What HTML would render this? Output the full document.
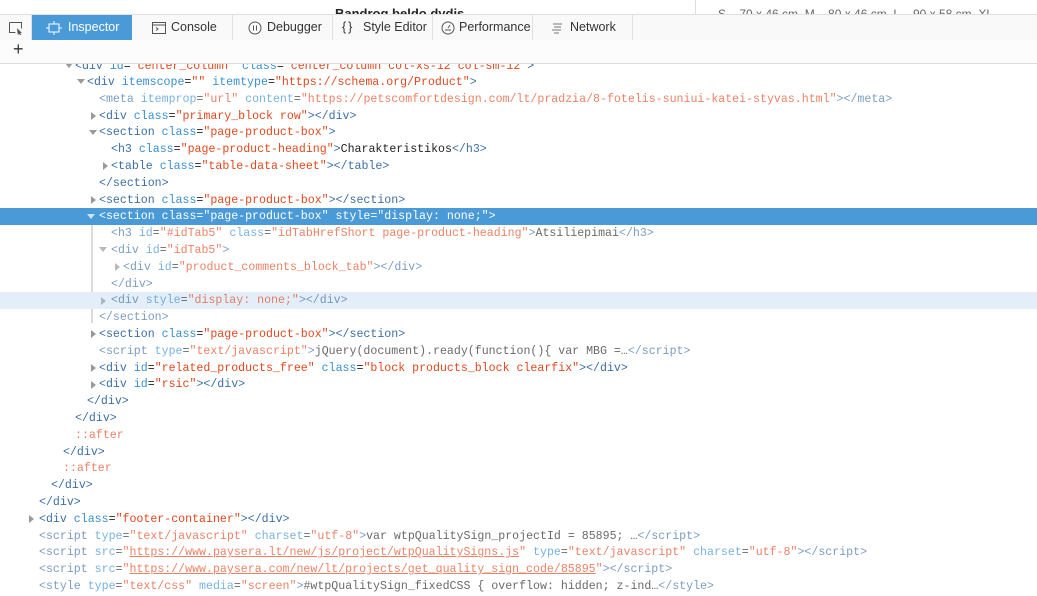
<!DOCTYPE html>
<html><head><meta charset="utf-8"><style>
body{margin:0;width:1037px;height:592px;overflow:hidden;background:#fff;position:relative;font-family:"Liberation Sans",sans-serif}
.top{position:absolute;left:0;top:0;width:1037px;height:14px;background:#fff;overflow:hidden}
.tabs{position:absolute;left:0;top:14px;width:1037px;height:25px;background:#f9f9fa;border-top:1px solid #e0e0e2;border-bottom:1px solid #dcdcde}
.tab{position:absolute;top:0;height:25px;line-height:25px;font-size:12.5px;color:#333;border-right:1px solid #e0e0e2;box-sizing:border-box}
.tab svg{position:absolute;top:6px}
.bar2{position:absolute;left:0;top:40px;width:1037px;height:23px;background:#fcfcfc;border-bottom:1px solid #dcdcde}
.ln{position:absolute;left:0;width:1037px;height:16.8px;line-height:16.8px;font-family:"Liberation Mono",monospace;font-size:11.6px;white-space:pre;color:#222}
.ln span.c{position:absolute;top:1.5px}
.t{color:#3c6fa5}.a{color:#3a8fd0}.v{color:#e2481e}.x{color:#222}.u{text-decoration:underline}
.f{opacity:.68}
.sel{background:#4a9ad8}.sel span,.sel .c *{color:#fff!important}
.hov{background:#e4eef8}
.tw{position:absolute;width:0;height:0}
.dn{border-left:4px solid transparent;border-right:4px solid transparent;border-top:5px solid #999;top:6px}
.rt{border-top:4px solid transparent;border-bottom:4px solid transparent;border-left:5px solid #999;top:5px}
.sel .dn{border-top-color:#cfe3f5}
</style></head><body>
<div class="top">
<div style="position:absolute;left:335px;top:6px;font-size:13px;font-weight:bold;color:#222">Bandrog beldo dydis</div>
<div style="position:absolute;left:695px;top:0;width:1px;height:14px;background:#ddd"></div>
<div style="position:absolute;left:718px;top:7px;font-size:12px;color:#666">S – 70 x 46 cm, M – 80 x 46 cm, L – 90 x 58 cm, XL</div>
</div>
<div class="tabs">
<div class="tab" style="left:0;width:32px"><svg width="16" height="14" viewBox="0 0 16 14" style="left:8px"><path d="M1.5 1.5h12v6M1.5 1.5v10h6" fill="none" stroke="#555"/><path d="M9 7l5 5-2 .3 1.2 1.5-1 .6-1.2-1.6-1.2 1.2z" fill="#555"/></svg></div>
<div class="tab" style="left:32px;width:100px;background:#4a9ad8;color:#fff;border:none"><svg width="16" height="14" viewBox="0 0 16 14" style="left:14px"><rect x="3" y="3" width="10" height="8" fill="none" stroke="#fff"/><path d="M8 0v3M8 11v3M0 7h3M13 7h3" stroke="#fff"/></svg><span style="position:absolute;left:36px">Inspector</span></div>
<div class="tab" style="left:132px;width:101px"><svg width="16" height="14" viewBox="0 0 16 14" style="left:19px"><rect x="1.5" y="1.5" width="13" height="11" fill="none" stroke="#555"/><path d="M1.5 4h13M5 6.5l2 1.5-2 1.5" fill="none" stroke="#555"/></svg><span style="position:absolute;left:39px">Console</span></div>
<div class="tab" style="left:233px;width:100px"><svg width="16" height="14" viewBox="0 0 16 14" style="left:14px"><circle cx="8" cy="7" r="6" fill="none" stroke="#555"/><path d="M6.5 4.5v5M9.5 4.5v5" stroke="#555"/></svg><span style="position:absolute;left:34px">Debugger</span></div>
<div class="tab" style="left:333px;width:100px"><span style="position:absolute;left:9px;letter-spacing:2px">{}</span><span style="position:absolute;left:30px">Style Editor</span></div>
<div class="tab" style="left:433px;width:100px"><svg width="16" height="14" viewBox="0 0 16 14" style="left:7px"><circle cx="8" cy="7" r="6" fill="none" stroke="#555"/><path d="M5 9h6M8 7l2-3" stroke="#555"/></svg><span style="position:absolute;left:26px">Performance</span></div>
<div class="tab" style="left:533px;width:100px"><svg width="16" height="14" viewBox="0 0 16 14" style="left:17px"><path d="M3 3h9M4 6h7M2 9h9M4 12h5" stroke="#777"/></svg><span style="position:absolute;left:37px">Network</span></div>
</div>
<div class="bar2"><span style="position:absolute;left:13px;top:-1px;font-size:18px;color:#333">+</span></div>

<div class="ln" style="top:64px;height:10px;overflow:hidden"><div style="position:absolute;top:-6.6px;left:0;width:1037px;height:16.8px"><span class="tw dn" style="left:65px"></span><span class="c" style="left:75px"><span class="t">&lt;div </span><span class="a">id</span><span class="x">=</span><span class="v">"center_column"</span><span class="a"> class</span><span class="x">=</span><span class="v">"center_column col-xs-12 col-sm-12"</span><span class="t">&gt;</span></span></div></div>

<div class="ln" style="top:73.4px"><span class="tw dn" style="left:77px"></span><span class="c" style="left:87px"><span class="t">&lt;div </span><span class="a">itemscope</span><span class="x">=</span><span class="v">""</span><span class="a"> itemtype</span><span class="x">=</span><span class="v">"https://schema.org/Product"</span><span class="t">&gt;</span></span></div>
<div class="ln f" style="top:90.2px"><span class="c" style="left:99px"><span class="t">&lt;meta </span><span class="a">itemprop</span><span class="x">=</span><span class="v">"url"</span><span class="a"> content</span><span class="x">=</span><span class="v">"https://petscomfortdesign.com/lt/pradzia/8-fotelis-suniui-katei-styvas.html"</span><span class="t">&gt;&lt;/meta&gt;</span></span></div>
<div class="ln" style="top:107px"><span class="tw rt" style="left:91px"></span><span class="c" style="left:99px"><span class="t">&lt;div </span><span class="a">class</span><span class="x">=</span><span class="v">"primary_block row"</span><span class="t">&gt;&lt;/div&gt;</span></span></div>
<div class="ln" style="top:123.8px"><span class="tw dn" style="left:89px"></span><span class="c" style="left:99px"><span class="t">&lt;section </span><span class="a">class</span><span class="x">=</span><span class="v">"page-product-box"</span><span class="t">&gt;</span></span></div>
<div class="ln" style="top:140.6px"><span class="c" style="left:111px"><span class="t">&lt;h3 </span><span class="a">class</span><span class="x">=</span><span class="v">"page-product-heading"</span><span class="t">&gt;</span><span class="x">Charakteristikos</span><span class="t">&lt;/h3&gt;</span></span></div>
<div class="ln" style="top:157.4px"><span class="tw rt" style="left:103px"></span><span class="c" style="left:111px"><span class="t">&lt;table </span><span class="a">class</span><span class="x">=</span><span class="v">"table-data-sheet"</span><span class="t">&gt;&lt;/table&gt;</span></span></div>
<div class="ln" style="top:174.2px"><span class="c" style="left:99px"><span class="t">&lt;/section&gt;</span></span></div>
<div class="ln" style="top:191px"><span class="tw rt" style="left:91px"></span><span class="c" style="left:99px"><span class="t">&lt;section </span><span class="a">class</span><span class="x">=</span><span class="v">"page-product-box"</span><span class="t">&gt;&lt;/section&gt;</span></span></div>
<div class="ln sel" style="top:207.8px"><span class="tw dn" style="left:87px"></span><span class="c" style="left:99px"><span>&lt;section class="page-product-box" style="display: none;"&gt;</span></span></div>
<div style="position:absolute;left:91px;top:225px;width:2px;height:98px;background:#dcdcde"></div>
<div class="ln f" style="top:224.6px"><span class="c" style="left:111px"><span class="t">&lt;h3 </span><span class="a">id</span><span class="x">=</span><span class="v">"#idTab5"</span><span class="a"> class</span><span class="x">=</span><span class="v">"idTabHrefShort page-product-heading"</span><span class="t">&gt;</span><span class="x">Atsiliepimai</span><span class="t">&lt;/h3&gt;</span></span></div>
<div class="ln f" style="top:241.4px"><span class="tw dn" style="left:99px"></span><span class="c" style="left:111px"><span class="t">&lt;div </span><span class="a">id</span><span class="x">=</span><span class="v">"idTab5"</span><span class="t">&gt;</span></span></div>
<div class="ln f" style="top:258.2px"><span class="tw rt" style="left:115px"></span><span class="c" style="left:123px"><span class="t">&lt;div </span><span class="a">id</span><span class="x">=</span><span class="v">"product_comments_block_tab"</span><span class="t">&gt;&lt;/div&gt;</span></span></div>
<div class="ln f" style="top:275px"><span class="c" style="left:111px"><span class="t">&lt;/div&gt;</span></span></div>
<div class="ln hov" style="top:291.8px"><span class="f"><span class="tw rt" style="left:101px"></span><span class="c" style="left:111px"><span class="t">&lt;div </span><span class="a">style</span><span class="x">=</span><span class="v">"display: none;"</span><span class="t">&gt;&lt;/div&gt;</span></span></span></div>
<div class="ln f" style="top:308.6px"><span class="c" style="left:99px"><span class="t">&lt;/section&gt;</span></span></div>
<div class="ln" style="top:325.4px"><span class="tw rt" style="left:91px"></span><span class="c" style="left:99px"><span class="t">&lt;section </span><span class="a">class</span><span class="x">=</span><span class="v">"page-product-box"</span><span class="t">&gt;&lt;/section&gt;</span></span></div>
<div class="ln" style="top:342.2px"><span class="c f" style="left:99px"><span class="t">&lt;script </span><span class="a">type</span><span class="x">=</span><span class="v">"text/javascript"</span><span class="t">&gt;</span><span class="x">jQuery(document).ready(function(){ var MBG =…</span><span class="t">&lt;/script&gt;</span></span></div>
<div class="ln" style="top:359px"><span class="tw rt" style="left:91px"></span><span class="c" style="left:99px"><span class="t">&lt;div </span><span class="a">id</span><span class="x">=</span><span class="v">"related_products_free"</span><span class="a"> class</span><span class="x">=</span><span class="v">"block products_block clearfix"</span><span class="t">&gt;&lt;/div&gt;</span></span></div>
<div class="ln" style="top:375.8px"><span class="tw rt" style="left:91px"></span><span class="c" style="left:99px"><span class="t">&lt;div </span><span class="a">id</span><span class="x">=</span><span class="v">"rsic"</span><span class="t">&gt;&lt;/div&gt;</span></span></div>
<div class="ln" style="top:392.6px"><span class="c" style="left:87px"><span class="t">&lt;/div&gt;</span></span></div>
<div class="ln" style="top:409.4px"><span class="c" style="left:75px"><span class="t">&lt;/div&gt;</span></span></div>
<div class="ln" style="top:426.2px"><span class="c f" style="left:75px"><span class="v">::after</span></span></div>
<div class="ln" style="top:443px"><span class="c" style="left:63px"><span class="t">&lt;/div&gt;</span></span></div>
<div class="ln" style="top:459.8px"><span class="c f" style="left:63px"><span class="v">::after</span></span></div>
<div class="ln" style="top:476.6px"><span class="c" style="left:51px"><span class="t">&lt;/div&gt;</span></span></div>
<div class="ln" style="top:493.4px"><span class="c" style="left:39px"><span class="t">&lt;/div&gt;</span></span></div>
<div class="ln" style="top:510.2px"><span class="tw rt" style="left:29px"></span><span class="c" style="left:39px"><span class="t">&lt;div </span><span class="a">class</span><span class="x">=</span><span class="v">"footer-container"</span><span class="t">&gt;&lt;/div&gt;</span></span></div>
<div class="ln" style="top:527px"><span class="c f" style="left:39px"><span class="t">&lt;script </span><span class="a">type</span><span class="x">=</span><span class="v">"text/javascript"</span><span class="a"> charset</span><span class="x">=</span><span class="v">"utf-8"</span><span class="t">&gt;</span><span class="x">var wtpQualitySign_projectId = 85895; …</span><span class="t">&lt;/script&gt;</span></span></div>
<div class="ln" style="top:543.8px"><span class="c f" style="left:39px"><span class="t">&lt;script </span><span class="a">src</span><span class="x">=</span><span class="v">"<span class="u">https://www.paysera.lt/new/js/project/wtpQualitySigns.js</span>"</span><span class="a"> type</span><span class="x">=</span><span class="v">"text/javascript"</span><span class="a"> charset</span><span class="x">=</span><span class="v">"utf-8"</span><span class="t">&gt;&lt;/script&gt;</span></span></div>
<div class="ln" style="top:560.6px"><span class="c f" style="left:39px"><span class="t">&lt;script </span><span class="a">src</span><span class="x">=</span><span class="v">"<span class="u">https://www.paysera.com/new/lt/projects/get_quality_sign_code/85895</span>"</span><span class="t">&gt;&lt;/script&gt;</span></span></div>
<div class="ln" style="top:577.4px"><span class="c f" style="left:39px"><span class="t">&lt;style </span><span class="a">type</span><span class="x">=</span><span class="v">"text/css"</span><span class="a"> media</span><span class="x">=</span><span class="v">"screen"</span><span class="t">&gt;</span><span class="x">#wtpQualitySign_fixedCSS { overflow: hidden; z-ind…</span><span class="t">&lt;/style&gt;</span></span></div>
</body></html>
